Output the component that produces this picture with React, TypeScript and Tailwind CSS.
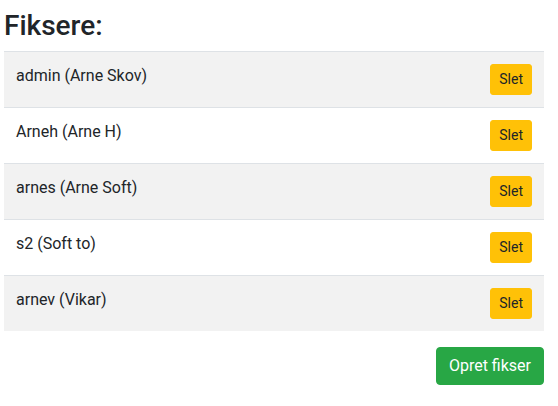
import React from "react";

const rows = [
  "admin (Arne Skov)",
  "Arneh (Arne H)",
  "arnes (Arne Soft)",
  "s2 (Soft to)",
  "arnev (Vikar)",
];

export default function App() {
  return (
    <div
      className="w-[558px] h-[406px] bg-white text-[#212529]"
      style={{ fontFamily: "Roboto, 'Liberation Sans', sans-serif" }}
    >
      <div className="ml-[4px] w-[540px] pt-[9px]">
        <h3 className="text-[28px] leading-[1.2] font-medium mb-[8px]">Fiksere:</h3>
        <div className="flex flex-col mb-[16px]">
          {rows.map((r, i) => (
            <div
              key={r}
              className={`flex items-start justify-between border-t border-[#dee2e6] p-[12px] ${
                i % 2 === 0 ? "bg-[#f2f2f2]" : "bg-white"
              }`}
            >
              <span className="text-[16px] leading-[24px]">{r}</span>
              <button className="h-[31px] px-[8px] text-[14px] leading-[21px] rounded-[3px] bg-[#ffc107] border border-[#ffc107] text-[#212529]">
                Slet
              </button>
            </div>
          ))}
        </div>
        <div className="flex justify-end">
          <button className="h-[38px] px-[12px] text-[16px] leading-[24px] rounded-[4px] bg-[#28a745] border border-[#28a745] text-white">
            Opret fikser
          </button>
        </div>
      </div>
    </div>
  );
}
